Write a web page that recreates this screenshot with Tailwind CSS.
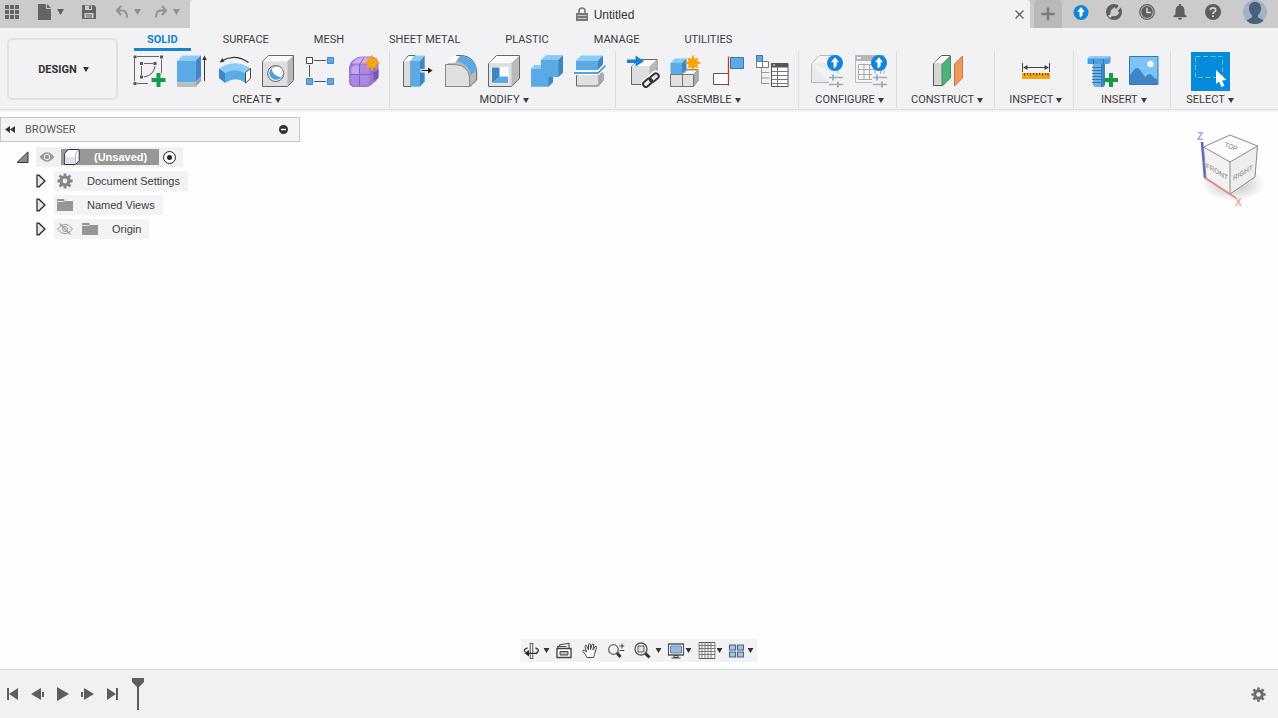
<!DOCTYPE html>
<html lang="en">
<head>
    <meta charset="UTF-8">
    <meta name="viewport" content="width=device-width, initial-scale=1.0">
    <title>Untitled</title>
    <script src="https://cdn.jsdelivr.net/npm/@tailwindcss/browser@4"></script>
</head>
<body class="h-screen flex flex-col overflow-hidden bg-[#fefefe] text-[#3c3c3c] text-[11px] leading-4 font-['Roboto','Liberation_Sans',sans-serif]">
    <!-- Shared symbols -->
    <svg class="hidden">
        <symbol id="caret" viewBox="0 0 6 5"><path d="M0 0h6L3 5z" fill="currentColor"/></symbol>
        <symbol id="star" viewBox="-9 -9 18 18">
            <path d="M0-8.700L1.700-4.100 5.600-5.600 4.100-1.700 8.700 0 4.100 1.700 5.600 5.600 1.700 4.100 0 8.700-1.700 4.100-5.600 5.600-4.100 1.700-8.700 0-4.100-1.700-5.600-5.600-1.700-4.100z" fill="#fba30a"/>
            <circle r="4.800" fill="#fba30a"/>
        </symbol>
        <symbol id="update" viewBox="0 0 16 16">
            <circle cx="8" cy="8" r="8" fill="#0f86dc"/>
            <path d="M8 2.200L12 7.200H9.700V11L7 13.600 6.500 12V7.200H4z" fill="#fff"/>
        </symbol>
        <symbol id="folder" viewBox="0 0 16 14"><path d="M0 1h7l1 2h8v10H0z" fill="#969696"/><path d="M0 3.500h6.500l1.500-1" fill="none" stroke="#e4e4e4"/></symbol>
        <symbol id="expand" viewBox="0 0 10 14"><path d="M1 1.200H3L9 7 3 12.800H1z" fill="#e6e6e6" stroke="#222" stroke-width="1.200"/></symbol>
        <symbol id="gear" viewBox="-8 -8 16 16">
            <g fill="none" stroke="currentColor">
                <circle r="4" stroke-width="3.200"/>
                <path stroke-width="2.800" d="M0-7.600V-5M0 7.600V5M-7.600 0H-5M7.600 0H5M-5.400-5.400l1.900 1.900M5.400 5.400L3.500 3.500M-5.400 5.400l1.900-1.900M5.400-5.400L3.500-3.500"/>
            </g>
        </symbol>
    </svg>

    <!-- Title bar -->
    <header class="flex h-7 shrink-0 bg-[#cbcbcb] text-[#5e5e5e]">
        <div class="flex items-center w-[190px] shrink-0 pb-1 pl-1">
            <button aria-label="Data panel" class="w-4 flex justify-center">
                <svg class="w-[14px] h-[14px]" viewBox="0 0 14 14"><path d="M0 0h4v4H0zM5 0h4v4H5zM10 0h4v4h-4zM0 5h4v4H0zM5 5h4v4H5zM10 5h4v4h-4zM0 10h4v4H0zM5 10h4v4H5zM10 10h4v4h-4z" fill="#646464"/></svg>
            </button>
            <button aria-label="File" class="flex items-center gap-[5px] ml-[18px]">
                <svg class="w-[14px] h-4" viewBox="0 0 14 16"><path d="M0 0h8v5h5v11H0z" fill="#646464"/><path d="M9 0l4 4H9z" fill="#646464"/></svg>
                <svg class="w-[7px] h-[6px]"><use href="#caret"/></svg>
            </button>
            <button aria-label="Save" class="ml-[17px]">
                <svg class="w-4 h-4" viewBox="0 0 16 16"><path d="M1 1h12l2 2v12H1z" fill="#646464"/><path d="M4 1.500h7V6H4zM3.500 9h9v5h-9z" fill="#cbcbcb"/><path d="M8 2h2v3H8zM5 10.500h6v1H5zM5 12.500h6v1H5z" fill="#646464"/></svg>
            </button>
            <button aria-label="Undo" class="flex items-center gap-[5px] ml-[18px] text-[#919191]">
                <svg class="w-[14px] h-[14px]" viewBox="0 0 14 14"><path d="M6 1L2 5.500 6 10M2 5.500h5.500Q12 5.500 12 12.500" fill="none" stroke="currentColor" stroke-width="2"/></svg>
                <svg class="w-[7px] h-[6px]"><use href="#caret"/></svg>
            </button>
            <button aria-label="Redo" class="flex items-center gap-[5px] ml-[13px] text-[#919191]">
                <svg class="w-[14px] h-[14px]" viewBox="0 0 14 14"><path d="M8 1l4 4.500L8 10M12 5.500H6.500Q2 5.500 2 12.500" fill="none" stroke="currentColor" stroke-width="2"/></svg>
                <svg class="w-[7px] h-[6px]"><use href="#caret"/></svg>
            </button>
        </div>
        <div class="flex flex-1 items-center bg-[#f2f2f4] rounded-t-[3px] pl-2 pr-1">
            <div class="flex flex-1 items-center justify-center gap-[6px]">
                <svg class="w-3 h-[14px]" viewBox="0 0 12 14"><path d="M3 6V4a3 3 0 0 1 6 0v2" fill="none" stroke="#777" stroke-width="1.600"/><path d="M0 6h12v8H0z" fill="#777"/><path d="M1.500 8.500h9M1.500 11.500h9" stroke="#c4c4c4"/></svg>
                <h1 class="pt-px text-[12px] font-['Liberation_Sans',sans-serif] text-[#333]">Untitled</h1>
            </div>
            <button aria-label="Close tab" class="w-[14px] flex justify-center">
                <svg class="w-[9px] h-[9px]" viewBox="0 0 9 9"><path d="M.5.5l8 8M8.500.5l-8 8" stroke="#666" stroke-width="1.300"/></svg>
            </button>
        </div>
        <div class="flex items-center w-[248px] shrink-0 pl-1">
            <button aria-label="New tab" class="flex items-center justify-center w-7 h-7 rounded-t-[3px] bg-[#b9b9b9]">
                <svg class="w-[14px] h-[14px]" viewBox="0 0 14 14"><path d="M7 .5v13M.5 7h13" stroke="#7b7b7b" stroke-width="2.600"/></svg>
            </button>
            <div class="flex items-center gap-[17px] pl-[11px] pb-1">
                <button aria-label="Updates"><svg class="w-4 h-[15px]"><use href="#update"/></svg></button>
                <button aria-label="Extensions">
                    <svg class="w-4 h-4" viewBox="0 0 16 16"><circle cx="8" cy="8" r="8" fill="#5e5e5e"/><path d="M2 11.500Q5 11 4.500 8 4.500 5.500 7 4.500L8.500 3l1.500 2L13.500 0 15.500 2.500 11.500 7l2 1.500L12 10.500Q10 13 7 12q-1.500 0-3 2z" fill="#cbcbcb"/><path d="M8.700 2.500l1.800 2L12.500 2zM11.800 6.800l2 1.500 1-3z" fill="#5e5e5e"/></svg>
                </button>
                <button aria-label="Job status">
                    <svg class="w-4 h-4" viewBox="0 0 16 16"><circle cx="8" cy="8" r="7.300" fill="none" stroke="#5e5e5e" stroke-width="1.200"/><circle cx="8" cy="8" r="5.900" fill="#5e5e5e"/><path d="M8 3.800V8.500h4" fill="none" stroke="#ddd" stroke-width="1.400"/></svg>
                </button>
                <button aria-label="Notifications">
                    <svg class="w-4 h-4" viewBox="0 0 16 16"><path d="M7 0h2v1.600Q12.500 2.500 12.500 7v3l2 2v1.300h-13V12l2-2V7Q3.500 2.500 7 1.600zM6 14h4q0 2-2 2t-2-2z" fill="#5e5e5e"/></svg>
                </button>
                <button aria-label="Help">
                    <svg class="w-4 h-4" viewBox="0 0 16 16"><circle cx="8" cy="8" r="8" fill="#5e5e5e"/><path d="M5.300 6.300Q5.300 3.800 8 3.800t2.700 2.200Q10.700 7.400 8.900 8.200 8 8.600 8 10" fill="none" stroke="#d8d8d8" stroke-width="1.700"/><path d="M7.100 11.200h1.800V13H7.100z" fill="#d8d8d8"/></svg>
                </button>
                <button aria-label="Account" class="-my-1 pl-[5px]">
                    <svg class="w-6 h-6" viewBox="0 0 24 24"><circle cx="12" cy="12" r="12" fill="#9eb2c8"/><path d="M12 2c4 0 6 2.600 6 6 0 3-1 5.500-3 7.300v2L20.500 20.500Q17 24 12 24T3.500 20.500L9 17.300v-2C7 13.500 6 11 6 8c0-3.400 2-6 6-6z" fill="#4b6079"/></svg>
                </button>
            </div>
        </div>
    </header>

    <!-- Ribbon -->
    <section class="flex shrink-0 h-[82px] bg-[#f2f2f4] border-b border-[#dcdcde] pl-[7px]">
        <button class="flex items-center justify-center gap-[6px] w-[111px] h-[62px] mt-[10px] mr-[3px] pt-px pl-[2px] shrink-0 border-2 border-[#e0e1e4] rounded-[5px] font-bold text-[#333]">
            DESIGN <svg class="w-[6px] h-[5px]"><use href="#caret"/></svg>
        </button>
        <div class="shrink-0">
            <nav class="flex gap-[19px] h-[23px] ml-[13px]">
                <a href="#" class="px-[13px] pt-1 border-b-[3px] border-[#1587cc] font-bold text-[#0d86cc]">SOLID</a>
                <a href="#" class="px-[13px] pt-1">SURFACE</a>
                <a href="#" class="px-[13px] pt-1">MESH</a>
                <a href="#" class="px-[13px] pt-1">SHEET METAL</a>
                <a href="#" class="px-[13px] pt-1">PLASTIC</a>
                <a href="#" class="px-[13px] pt-1">MANAGE</a>
                <a href="#" class="px-[13px] pt-1">UTILITIES</a>
            </nav>
            <div class="flex">
                <!-- Create -->
                <div class="flex flex-col items-center pl-[11px] pr-2 border-r border-[#dcdde0]">
                    <div class="flex items-center gap-[9px] h-10">
                        <button aria-label="Create sketch">
                            <svg class="w-[34px] h-[34px]" viewBox="0 0 34 34"><path d="M5 2.500h22M2.500 5v22M29.500 5.500V19M5 29.500h11M12 9.500h9M9.500 12v9" stroke="#666"/><path d="M23 12Q22 21 12 23" fill="none" stroke="#555"/><path d="M1.500 1.500h3v3h-3zM28 1.500h3v3h-3zM1.500 28h3v3h-3zM8 8h3v3H8zM21.500 8h3v3h-3zM8 21.500h3v3H8z" fill="#555"/><path d="M26.500 19v14M19.500 26h14" stroke="#17994a" stroke-width="4"/></svg>
                        </button>
                        <button aria-label="Extrude">
                            <svg class="w-[34px] h-[34px]" viewBox="0 0 34 34"><path d="M2 29h18.500v4H2z" fill="#bcbcbc"/><path d="M20.500 29L26 23v4l-5.500 6z" fill="#999"/><path d="M2 7h18.500v21.500H2z" fill="#5baae6"/><path d="M2 7l5.500-5.500H26L20.500 7z" fill="#8accf8"/><path d="M20.500 7L26 1.500v21l-5.500 6z" fill="#3d86c6"/><path d="M29.500 4v23" stroke="#333"/><path d="M29.500 1.500l2.300 4.500h-4.600z" fill="#333"/></svg>
                        </button>
                        <button aria-label="Revolve">
                            <svg class="w-[34px] h-[34px]" viewBox="0 0 34 34"><path d="M30.500 8.500Q17-1 4 6.800" fill="none" stroke="#333" stroke-width="1.200"/><path d="M1.500 8.500L4.300 4l2 3.700z" fill="#333"/><path d="M1 14.500Q17 4 32.500 14.500L27 19Q17 13 7 19z" fill="#8accf8"/><path d="M7 19Q17 13 27 19v9.500Q17 22 7 29z" fill="#5baae6"/><path d="M1 14.500L7 19v10l-6-5z" fill="#3d86c6"/><path d="M27.500 18.500l5-4v10l-5 4.500z" fill="#fff" stroke="#444"/></svg>
                        </button>
                        <button aria-label="Hole">
                            <svg class="w-[34px] h-[34px]" viewBox="0 0 34 34"><path d="M1.500 7.500l6-6h25v25l-6 6h-25z" fill="#dedede" stroke="#666"/><path d="M2 7.500L7.500 2H32l-5.500 5.500z" fill="#fafafa"/><path d="M26.500 7.500L32 2v24l-5.500 6z" fill="#b8b8b8"/><circle cx="14.700" cy="19.500" r="8" fill="#fff" stroke="#555"/><path d="M11 14Q10 21 20.500 23.500 17 27 12.500 25.300 8 23 8.300 18.500 9 15 11 14z" fill="#4d9fdf"/><path d="M11 14a6.600 6.600 0 0 1 9.500 9.500" fill="none" stroke="#9a9a9a"/></svg>
                        </button>
                        <button aria-label="Rectangular pattern">
                            <svg class="w-[34px] h-[34px]" viewBox="0 0 34 34"><path d="M10 6.500h12M5.500 11v12M10 27.500h12" stroke="#555"/><path d="M2.500 3.500h6v6h-6z" fill="#fff" stroke="#444"/><g fill="#5baae6" stroke="#3f8ccb"><path d="M23.500 3.500h6v6h-6zM2.500 24.500h6v6h-6zM23.500 24.500h6v6h-6z"/></g></svg>
                        </button>
                        <button aria-label="Create form">
                            <svg class="w-[34px] h-[34px]" viewBox="0 0 34 34"><path d="M2 13Q2.500 9 6 6L10 3.500Q12 2.500 16 2.500h9q6 1 6.500 8v11q0 3-3 6l-4 3.300Q22 33 19 33H8q-6 0-6-6z" fill="#9a76cc"/><path d="M3.500 15q0-4 5-4.500h9q5 0 5 4.500v11q0 5.500-4.500 5.500H8.500q-5 0-5-5z" fill="#ab87e6"/><path d="M5 9.500Q9 4 14 3.500h12L20 9.500z" fill="#cdb2f5"/><path d="M12.500 10.500v21M3 20.500h20l8.500-4M12.500 10.500L17 4" fill="none" stroke="#8560bb"/><path d="M4.500 15Q5 11.500 8.500 11.500H12v8.500H4.500z" fill="#c3a4f3"/><path d="M26.500 18l5-2v8l-5 3z" fill="#7b57ae"/><svg x="16" y="0" width="18" height="18"><use href="#star"/></svg></svg>
                        </button>
                    </div>
                    <button class="flex items-center gap-[3px] pt-px px-[3px]">CREATE <svg class="w-[6px] h-[5px]"><use href="#caret"/></svg></button>
                </div>
                <!-- Modify -->
                <div class="flex flex-col items-center pl-[11px] pr-2 border-r border-[#dcdde0]">
                    <div class="flex items-center gap-[9px] h-10">
                        <button aria-label="Press pull">
                            <svg class="w-[34px] h-[34px]" viewBox="0 0 34 34"><path d="M2.500 7.500l5-6H14l-4 6v25H2.500z" fill="#dcdcdc" stroke="#666"/><path d="M3 7l5-5h5L9.500 7z" fill="#fff"/><path d="M9.500 7H19v25.700H9.500z" fill="#5baae6"/><path d="M9.500 7L14 1.500h9.700L19 7z" fill="#8accf8"/><path d="M19 7l4.700-5.500v25.700L19 32.700z" fill="#3d86c6"/><path d="M19.500 16.700h9" stroke="#fff" stroke-width="3.500"/><path d="M20.500 16.500h7" stroke="#222" stroke-width="1.200"/><path d="M27 13.500l4.500 3-4.500 3z" fill="#222"/></svg>
                        </button>
                        <button aria-label="Fillet">
                            <svg class="w-[34px] h-[34px]" viewBox="0 0 34 34"><path d="M1.500 12.500l11-11h6Q31 3 32.700 17v9l-7 6.500H1.500z" fill="#b9b9b9" stroke="#666"/><path d="M1.500 10.500h9Q24 11 25.500 23v9.500h-24z" fill="#e0e0e0" stroke="#888"/><path d="M3 9.500L10.500 2h5l-4 6.500z" fill="#fff"/><path d="M12 7.500L17 1.500Q32 4 32.700 16.500L26.500 21Q24.500 9 12 7.500z" fill="#5baae6"/></svg>
                        </button>
                        <button aria-label="Shell">
                            <svg class="w-[34px] h-[34px]" viewBox="0 0 34 34"><path d="M1.500 9.500l8-8h23v23l-8 8h-23z" fill="#e0e0e0" stroke="#666"/><path d="M2 9l8-7h22l-7.500 7z" fill="#fafafa"/><path d="M24.500 9L32 2v22.500L24.500 32z" fill="#b9b9b9"/><path d="M4.500 13h17v16.500h-17z" fill="#fff"/><path d="M5 13.500h7.500V23L5 29z" fill="#3d86c6"/><path d="M12.500 22.500H21V29H5z" fill="#5baae6"/></svg>
                        </button>
                        <button aria-label="Combine">
                            <svg class="w-[34px] h-[34px]" viewBox="0 0 34 34"><path d="M1 15l4-4h6V6l5-4.500h17v17L28.500 23H23v5l-4.500 4.700H1z" fill="#5baae6"/><path d="M11 6l5-4.500h17L28.500 6zM1 15l4-4h6v4z" fill="#8accf8"/><path d="M28.500 6L33 1.500v17L28.500 23zM18.500 23H23v5l-4.500 4.700z" fill="#3d86c6"/></svg>
                        </button>
                        <button aria-label="Split body">
                            <svg class="w-[34px] h-[34px]" viewBox="0 0 34 34"><path d="M3.500 21.500l3-2H30v7l-5 5.500H3.500z" fill="#e0e0e0" stroke="#666"/><path d="M25 21.500l5-4V26l-5 6z" fill="#aaa"/><path d="M3 6.500h22v9.500H3z" fill="#5baae6"/><path d="M3 6.500l5-5h22l-5 5z" fill="#8accf8"/><path d="M25 6.500l5-5V11l-5 5z" fill="#3d86c6"/><path d="M1 19h24l7.500-8.500" fill="none" stroke="#fff" stroke-width="4"/><path d="M1 19h24l7.500-7.500" fill="none" stroke="#2683c9" stroke-width="1.400"/></svg>
                        </button>
                    </div>
                    <button class="flex items-center gap-[3px] pt-px px-[3px]">MODIFY <svg class="w-[6px] h-[5px]"><use href="#caret"/></svg></button>
                </div>
                <!-- Assemble -->
                <div class="flex flex-col items-center pl-[11px] pr-2 border-r border-[#dcdde0]">
                    <div class="flex items-center gap-[9px] h-10">
                        <button aria-label="Insert component">
                            <svg class="w-[34px] h-[34px]" viewBox="0 0 34 34"><path d="M4.500 12.500l7-7h18.500v18l-7 7H4.500z" fill="#dedede" stroke="#666"/><path d="M5 12l7-6h17l-6.500 6z" fill="#fafafa"/><path d="M22.500 12.500L29.500 6v17l-7 7z" fill="#b9b9b9"/><path d="M0 5.500h8.500V1.500l8.500 5.700-8.500 5.300V9H0z" fill="#1382d4"/><g fill="none" stroke="#f2f2f4" stroke-width="5"><rect x="-5" y="-2.500" width="10" height="5.500" rx="2.700" transform="translate(21 28.500) rotate(-45)"/><rect x="-5" y="-2.500" width="10" height="5.500" rx="2.700" transform="translate(27 23) rotate(-45)"/></g><g fill="none" stroke="#333" stroke-width="2"><rect x="-5" y="-2.500" width="10" height="5.500" rx="2.700" transform="translate(20.500 28.500) rotate(-40)"/><rect x="-5" y="-2.500" width="10" height="5.500" rx="2.700" transform="translate(27 23.500) rotate(-40)"/></g></svg>
                        </button>
                        <button aria-label="New component">
                            <svg class="w-[34px] h-[34px]" viewBox="0 0 34 34"><path d="M.5 20.500h12.500l4-5h11v11l-4.500 6H.5z" fill="#e0e0e0" stroke="#777"/><path d="M12.500 20.500L17 16h11l-4.500 4.500z" fill="#fafafa" stroke="#999"/><path d="M23.500 20.500l5-4.500v10.500l-5 6z" fill="#aaa"/><path d="M12.500 20v12.500M.5 20.500h23v12" fill="none" stroke="#777"/><path d="M.5 9H12v11H.5z" fill="#5baae6"/><path d="M.5 9L5 4.500h12L12 9z" fill="#8accf8"/><path d="M12 9l4.500-4.500v11L12 20z" fill="#3d86c6"/><svg x="14" y="0" width="18" height="18"><use href="#star"/></svg></svg>
                        </button>
                        <button aria-label="Joint">
                            <svg class="w-[34px] h-[34px]" viewBox="0 0 34 34"><path d="M15.500 19.500H.5v11h15" fill="#fff" stroke="#555"/><path d="M17.500 3.500h13v11h-13z" fill="#5baae6" stroke="#3577b4"/><path d="M15.500 2.500v29" stroke="#b4452c" stroke-width="1.300"/></svg>
                        </button>
                        <button aria-label="Bill of materials">
                            <svg class="w-[34px] h-[34px]" viewBox="0 0 34 34"><path d="M.5 1.500h6v6h-6z" fill="#5baae6" stroke="#3577b4"/><path d="M.5 7.500h6v6h-6zM6.500 7.500h6v6h-6z" fill="#fff" stroke="#777"/><path d="M5.500 14v15.500h8M5.500 18.500h8M5.500 24h8" fill="none" stroke="#999"/><path d="M15.500 9.500h16.500v23H15.500z" fill="#fff" stroke="#555"/><path d="M15.500 9h16.500v4.500H15.500z" fill="#555"/><path d="M21.500 13v19.500M16 17.500h16M16 21.500h16M16 25.500h16M16 29.500h16" stroke="#777"/><path d="M17 11h2" stroke="#fff"/></svg>
                        </button>
                    </div>
                    <button class="flex items-center gap-[3px] pt-px px-[3px]">ASSEMBLE <svg class="w-[6px] h-[5px]"><use href="#caret"/></svg></button>
                </div>
                <!-- Configure -->
                <div class="flex flex-col items-center pl-3 pr-2 border-r border-[#dcdde0]">
                    <div class="flex items-center gap-[9px] h-10">
                        <button aria-label="Create configuration">
                            <svg class="w-[34px] h-[34px]" viewBox="0 0 34 34"><path d="M.5 9.500l8-8H27v18M18 28.500H.5v-19" fill="#eaeaec" stroke="#b8b8b8"/><path d="M1 9l8-7h14l-6 7z" fill="#f4f4f4"/><path d="M18 23.500h14M18 30.500h14" stroke="#aaa" stroke-width="1.500"/><path d="M22 20.500v6" stroke="#7ab9e4" stroke-width="2"/><path d="M27 27.500v6" stroke="#aaa" stroke-width="2"/><use href="#update" x="16" y="1" width="16" height="16"/></svg>
                        </button>
                        <button aria-label="Configuration table">
                            <svg class="w-[34px] h-[34px]" viewBox="0 0 34 34"><path d="M1.500 1.500H30v27H1.500z" fill="#f4f4f4" stroke="#bbb"/><path d="M1.500 1.500H30v5.500H1.500z" fill="#b5b5b5"/><path d="M3 4h4" stroke="#fff" stroke-width="1.500"/><path d="M4.500 10.500h22v15h-22zM4.500 15.500h22M4.500 20.500h22M10 10v15M15.500 10v15M21 10v15" fill="none" stroke="#a9a9a9"/><path d="M18 20h15v14H18z" fill="#f2f2f4"/><path d="M19 23.500h14M19 30.500h14" stroke="#aaa" stroke-width="1.500"/><path d="M23 20.500v6" stroke="#7ab9e4" stroke-width="2"/><path d="M28 27.500v6" stroke="#aaa" stroke-width="2"/><use href="#update" x="17" y="1" width="16" height="16"/></svg>
                        </button>
                    </div>
                    <button class="flex items-center gap-[3px] pt-px px-[3px]">CONFIGURE <svg class="w-[6px] h-[5px]"><use href="#caret"/></svg></button>
                </div>
                <!-- Construct -->
                <div class="flex flex-col items-center pl-[11px] pr-2 border-r border-[#dcdde0]">
                    <div class="flex items-center h-10">
                        <button aria-label="Offset plane">
                            <svg class="w-[34px] h-[34px]" viewBox="0 0 34 34"><path d="M3.500 9.500l8-8H20v21l-7 9H3.500z" fill="#d6d6d6" stroke="#555"/><path d="M4 9l8-7h7.500l-7 7z" fill="#fff"/><path d="M12 10.500l8.500-8.500v22L12 32z" fill="#4cb17a" stroke="#35925f"/><path d="M24.500 10l8-8v22l-8 8z" fill="#ee9a5a" stroke="#c77a3e"/></svg>
                        </button>
                    </div>
                    <button class="flex items-center gap-[3px] pt-px px-[3px]">CONSTRUCT <svg class="w-[6px] h-[5px]"><use href="#caret"/></svg></button>
                </div>
                <!-- Inspect -->
                <div class="flex flex-col items-center pl-[11px] pr-2 border-r border-[#dcdde0]">
                    <div class="flex items-center h-10">
                        <button aria-label="Measure">
                            <svg class="w-[34px] h-[34px]" viewBox="0 0 34 34"><path d="M3.500 9v9M30.500 9v9M6 13.500h22" stroke="#444"/><path d="M4 13.500L8.500 11v5zM30 13.500L25.500 11v5z" fill="#444"/><path d="M3 19h28v6H3z" fill="#fba30a"/><path d="M5.500 19v3M8.500 19v2M11.500 19v3M14.500 19v2M17.500 19v3M20.500 19v2M23.500 19v3M26.500 19v2M29 19v3" stroke="#6b4a10"/></svg>
                        </button>
                    </div>
                    <button class="flex items-center gap-[3px] pt-px px-[3px]">INSPECT <svg class="w-[6px] h-[5px]"><use href="#caret"/></svg></button>
                </div>
                <!-- Insert -->
                <div class="flex flex-col items-center pl-[11px] pr-2 border-r border-[#dcdde0]">
                    <div class="flex items-center gap-[9px] h-10">
                        <button aria-label="Insert fastener">
                            <svg class="w-[34px] h-[34px]" viewBox="0 0 34 34"><path d="M8 10h12v21l-2 2h-8l-2-2z" fill="#6ab0e6"/><path d="M16 10h4v21l-2 2h-2z" fill="#3d86c6"/><path d="M7 13.500h13M7 16.500h13M7 19.500h13M7 22.500h13M7 25.500h13M7 28.500h13" stroke="#3776b0"/><path d="M2.500 4.500L5 2.500h20.500V8l-2 2h-21z" fill="#4d9fdf"/><path d="M2.500 4.500L5 2.500h20.500l-2 2z" fill="#8accf8"/><path d="M8.500 5v5M18.500 5v5" stroke="#3577b4"/><path d="M26 19v14M19 26h14" stroke="#17994a" stroke-width="4"/></svg>
                        </button>
                        <button aria-label="Insert canvas">
                            <svg class="w-[34px] h-[34px]" viewBox="0 0 34 34"><path d="M1.500 2.500h28.500v28H1.500z" fill="#7cc3f7" stroke="#3577b4"/><circle cx="22.500" cy="10" r="3.200" fill="#fdf6d2"/><path d="M2 21Q4 19 5.500 16.500 9 12 12 16q3 5 5.500 7Q21 18 24 21.500q3 3.500 5.500 3.500v5H2z" fill="#3d86c6"/></svg>
                        </button>
                    </div>
                    <button class="flex items-center gap-[3px] pt-px px-[3px]">INSERT <svg class="w-[6px] h-[5px]"><use href="#caret"/></svg></button>
                </div>
                <!-- Select -->
                <div class="flex flex-col items-center px-3">
                    <div class="flex items-center h-10">
                        <button aria-label="Select" class="bg-[#058ade]">
                            <svg class="w-[39px] h-[39px]" viewBox="0 0 39 39"><path d="M4.500 4.500h27v21h-27z" fill="none" stroke="#5fd08c" stroke-dasharray="5 2.500"/><path d="M25 18v14l3-2.500 2.500 5.500 3-1.300L31 28.500l4.500-.5z" fill="#fff"/></svg>
                        </button>
                    </div>
                    <button class="flex items-center gap-[3px] pt-px px-[3px]">SELECT <svg class="w-[6px] h-[5px]"><use href="#caret"/></svg></button>
                </div>
            </div>
        </div>
    </section>

    <!-- Canvas -->
    <main class="relative flex-1 border-t-2 border-[#f4f4f5] font-['Liberation_Sans',sans-serif]">
        <!-- Browser panel -->
        <aside class="w-[300px] mt-[5px]">
            <div class="flex items-center h-[25px] pl-1 pr-[11px] bg-[#f4f4f5] border border-[#c6c6c8] font-['Roboto',sans-serif] text-[#5a5a5a]">
                <button aria-label="Collapse browser"><svg class="w-[10px] h-[7px]" viewBox="0 0 10 7"><path d="M5 0v7L0 3.500zM10 0v7L5 3.500z" fill="#333"/></svg></button>
                <h2 class="flex-1 pl-[10px]">BROWSER</h2>
                <button aria-label="Browser options"><svg class="w-[9px] h-[9px]" viewBox="0 0 9 9"><circle cx="4.500" cy="4.500" r="4.500" fill="#333"/><path d="M2 4.500h5" stroke="#fff" stroke-width="1.400"/></svg></button>
            </div>
            <ul class="mt-[5px] space-y-1">
                <li class="flex items-center h-5 pl-4">
                    <button aria-label="Collapse" class="w-5"><svg class="w-[13px] h-3" viewBox="0 0 13 12"><path d="M12 .8v10.700H1z" fill="#8c8c8c" stroke="#333"/></svg></button>
                    <div class="flex items-center h-5 pl-[3px] pr-[7px] bg-[#f1f1f3]">
                        <button aria-label="Hide"><svg class="w-4 h-[10px]" viewBox="0 0 15 10"><path d="M0 5Q7.500-4.500 15 5 7.500 14.500 0 5z" fill="#9a9a9a"/><circle cx="7.500" cy="5" r="2.800" fill="#9a9a9a" stroke="#f4f4f4"/></svg></button>
                        <div class="flex items-center h-4 ml-[6px] pl-[3px] pr-3 gap-[14px] bg-[#979797] text-white font-bold">
                            <svg class="w-4 h-4" viewBox="0 0 16 16"><path d="M.7 4.500l3.500-4h11v11l-3.500 4H.7z" fill="#fff" stroke="#333"/><path d="M1.500 8h10v7h-10z" fill="#dbe5ee"/><path d="M11.700 4.500v11M11.700 4.500l3.500-4" stroke="#999" stroke-width=".8"/></svg>
                            (Unsaved)
                        </div>
                        <input type="radio" name="active" checked aria-label="Activate component" class="appearance-none w-[13px] h-[13px] ml-1 rounded-full border border-[#222] bg-[radial-gradient(circle,#222_2px,#fff_3px)]">
                    </div>
                </li>
                <li class="flex items-center h-5 pl-9">
                    <button aria-label="Expand" class="w-[18px]"><svg class="w-[10px] h-[14px]"><use href="#expand"/></svg></button>
                    <div class="flex items-center h-5 pl-[3px] pr-2 gap-[14px] bg-[#f3f3f5]">
                        <svg class="w-4 h-4 text-[#858585]"><use href="#gear"/></svg>
                        Document Settings
                    </div>
                </li>
                <li class="flex items-center h-5 pl-9">
                    <button aria-label="Expand" class="w-[18px]"><svg class="w-[10px] h-[14px]"><use href="#expand"/></svg></button>
                    <div class="flex items-center h-5 pl-[3px] pr-2 gap-[14px] bg-[#f3f3f5]">
                        <svg class="w-4 h-[14px]"><use href="#folder"/></svg>
                        Named Views
                    </div>
                </li>
                <li class="flex items-center h-5 pl-9">
                    <button aria-label="Expand" class="w-[18px]"><svg class="w-[10px] h-[14px]"><use href="#expand"/></svg></button>
                    <div class="flex items-center h-5 pl-[3px] pr-2 bg-[#f3f3f5]">
                        <button aria-label="Show"><svg class="w-4 h-3" viewBox="0 0 16 12"><path d="M.5 6Q8-3.500 15.500 6 8 15.500.5 6z" fill="none" stroke="#999"/><circle cx="8" cy="6" r="2.500" fill="none" stroke="#999"/><path d="M2.500.5l11 11" stroke="#999" stroke-width="1.200"/></svg></button>
                        <svg class="w-4 h-[14px] ml-[9px] mr-[14px]"><use href="#folder"/></svg>
                        Origin
                    </div>
                </li>
            </ul>
        </aside>

        <!-- View cube -->
        <svg class="absolute top-4 right-3 w-[76px] h-20" viewBox="0 0 76 80">
            <defs><radialGradient id="shade"><stop offset="0" stop-color="#bbb"/><stop offset="1" stop-color="#bbb" stop-opacity="0"/></radialGradient></defs>
            <ellipse cx="43" cy="56" rx="32" ry="17" fill="url(#shade)"/>
            <path d="M12 14l3 36" stroke="#5862d0" stroke-width="2.500"/>
            <path d="M40 7l27.500 11L40 34 13.500 19z" fill="#fbfbfb"/>
            <path d="M13.500 19L40 34v32L16 50z" fill="#f2f2f2"/>
            <path d="M40 34l27.500-16L65 49 40 66z" fill="#ededee"/>
            <path d="M13.500 19L40 7l27.500 11L65 49 40 66 16 50zM13.500 19L40 34l27.500-16M40 34v32" fill="none" stroke="#8a8a8a"/>
            <path d="M15 50l31 20" stroke="#e88a7e" stroke-width="1.800"/>
            <g fill="#858585" font-size="7" text-anchor="middle" font-family="Roboto, sans-serif">
                <text transform="translate(27 46) skewY(30)">FRONT</text>
                <text transform="translate(53 47) skewY(-30)">RIGHT</text>
                <text transform="translate(40 21) rotate(20)">TOP</text>
            </g>
            <g font-weight="bold" font-size="10">
                <text x="7" y="12" fill="#9aa0e6">Z</text>
                <text x="45" y="78" fill="#f0a297">X</text>
            </g>
        </svg>

        <!-- Navigation bar -->
        <div class="absolute bottom-[7px] left-1/2 -translate-x-1/2 flex items-center h-[23px] pl-[3px] pr-1 bg-[#f2f2f4] text-[#333]">
            <button aria-label="Orbit" class="flex items-center gap-1">
                <svg class="w-4 h-[18px]" viewBox="0 0 16 18"><path d="M8 1v16" stroke="#555" stroke-width="3.500"/><path d="M8 2v14" stroke="#fff" stroke-width="1.500"/><path d="M12 5.800Q18 8.500 12 11.500M4 5.800Q-1.500 8 2 10M5 11.300h9" fill="none" stroke="#333" stroke-width="1.300"/><path d="M1 11.300L5.500 8v6.500z" fill="#222"/></svg>
                <svg class="w-[6px] h-[5px]"><use href="#caret"/></svg>
            </button>
            <button aria-label="Look at" class="ml-[6px]">
                <svg class="w-[17px] h-[17px]" viewBox="0 0 17 17"><path d="M1.500 6.500h14v9h-14z" fill="#fff" stroke="#444" stroke-width="1.400"/><path d="M4.500 9.500h8v3.500h-8z" fill="#bbb" stroke="#444"/><path d="M2 6L5 2.500M1.500 4.500H11M5 2.500L13.500 1.500V6" fill="none" stroke="#555" stroke-width="1.200"/></svg>
            </button>
            <button aria-label="Pan" class="ml-[9px]">
                <svg class="w-[17px] h-[17px]" viewBox="0 0 17 17"><path d="M5.500 15.500Q4 12 1.500 9.500.8 8 2.500 8l2.500 2-1.500-5.500q0-1.800 1.500-1L7 8V2.200q1-1.500 2 0V7.500L10.500 2.500q1.500-1 1.800.5L11.500 8l2-3.500q1.800-.5 1.500 1L13 12.500l-1 3z" fill="#fff" stroke="#444"/></svg>
            </button>
            <button aria-label="Zoom" class="ml-[9px]">
                <svg class="w-[17px] h-[17px]" viewBox="0 0 17 17"><circle cx="6" cy="7.500" r="4.800" fill="#eef3f8" stroke="#666" stroke-width="1.300"/><path d="M9.500 11l3.500 4" stroke="#333" stroke-width="2.800"/><path d="M12 4h5M14.500 1.500v5M12 8.500h5" stroke="#444"/></svg>
            </button>
            <button aria-label="Fit" class="flex items-center gap-1 ml-[9px]">
                <svg class="w-[18px] h-[17px]" viewBox="0 0 18 17"><circle cx="7.500" cy="7" r="6" fill="#fff" stroke="#555" stroke-width="1.400"/><path d="M4.500 4h6v6h-6z" fill="#dfe7ef" stroke="#555"/><path d="M12 11.500l4 4" stroke="#333" stroke-width="3"/></svg>
                <svg class="w-[6px] h-[5px]"><use href="#caret"/></svg>
            </button>
            <button aria-label="Display settings" class="flex items-center gap-[1px] ml-[6px]">
                <svg class="w-[17px] h-4" viewBox="0 0 17 16"><path d="M1 1h15v11H1z" fill="#fff" stroke="#555" stroke-width="1.300"/><path d="M3 3h11v7H3z" fill="#98b6e2" stroke="#6b86ad"/><path d="M6.500 12.500h4v2h-4zM4 15h9" stroke="#444" fill="#ccc"/></svg>
                <svg class="w-[6px] h-[5px]"><use href="#caret"/></svg>
            </button>
            <button aria-label="Grid and snaps" class="flex items-center gap-[1px] ml-[7px]">
                <svg class="w-[17px] h-[17px]" viewBox="0 0 17 17"><path d="M.5.5h16v16H.5z" fill="#fff" stroke="#555"/><path d="M3.500 0v17M6.500 0v17M9.500 0v17M12.500 0v17M0 3.500h17M0 6.500h17M0 9.500h17M0 12.500h17" stroke="#777"/></svg>
                <svg class="w-[6px] h-[5px]"><use href="#caret"/></svg>
            </button>
            <button aria-label="Viewports" class="flex items-center gap-[3px] ml-[6px]">
                <svg class="w-4 h-[14px]" viewBox="0 0 16 14"><path d="M1 1h6v5H1zM9 1h6v5H9zM1 8h6v5H1zM9 8h6v5H9z" fill="#a9c3e6" stroke="#4a6285" stroke-width="1.200"/></svg>
                <svg class="w-[6px] h-[5px]"><use href="#caret"/></svg>
            </button>
        </div>
    </main>

    <!-- Timeline -->
    <footer class="flex items-center h-[49px] shrink-0 pl-[5px] pr-3 bg-[#f1f1f3] border-t border-[#d6d6d6] text-[#5e5e5e]">
        <button aria-label="Go to start" class="w-[25px]"><svg class="w-[15px] h-3" viewBox="0 0 15 12"><path d="M2 0h2v12H2zM13 0v12L4 6z" fill="currentColor"/></svg></button>
        <button aria-label="Step back" class="w-[25px]"><svg class="w-[15px] h-3" viewBox="0 0 15 12"><path d="M11 0v12L1 6zM12 4h2v5h-2z" fill="currentColor"/></svg></button>
        <button aria-label="Play" class="w-[25px]"><svg class="w-[15px] h-[14px]" viewBox="0 0 15 14"><path d="M2 0l12 7-12 7z" fill="currentColor"/></svg></button>
        <button aria-label="Step forward" class="w-[25px]"><svg class="w-[15px] h-3" viewBox="0 0 15 12"><path d="M4 0l10 6-10 6zM1 4h2v5H1z" fill="currentColor"/></svg></button>
        <button aria-label="Go to end" class="w-[25px]"><svg class="w-[15px] h-3" viewBox="0 0 15 12"><path d="M2 0l9 6-9 6zM11 0h2v12h-2z" fill="currentColor"/></svg></button>
        <button aria-label="Timeline marker" class="pl-[2px]"><svg class="w-3 h-8" viewBox="0 0 12 32"><path d="M0 0h12v4L7 9v23H5V9L0 4z" fill="currentColor"/></svg></button>
        <button aria-label="Timeline settings" class="ml-auto text-[#6c6c6c]"><svg class="w-[15px] h-[15px]"><use href="#gear"/></svg></button>
    </footer>
</body>
</html>
